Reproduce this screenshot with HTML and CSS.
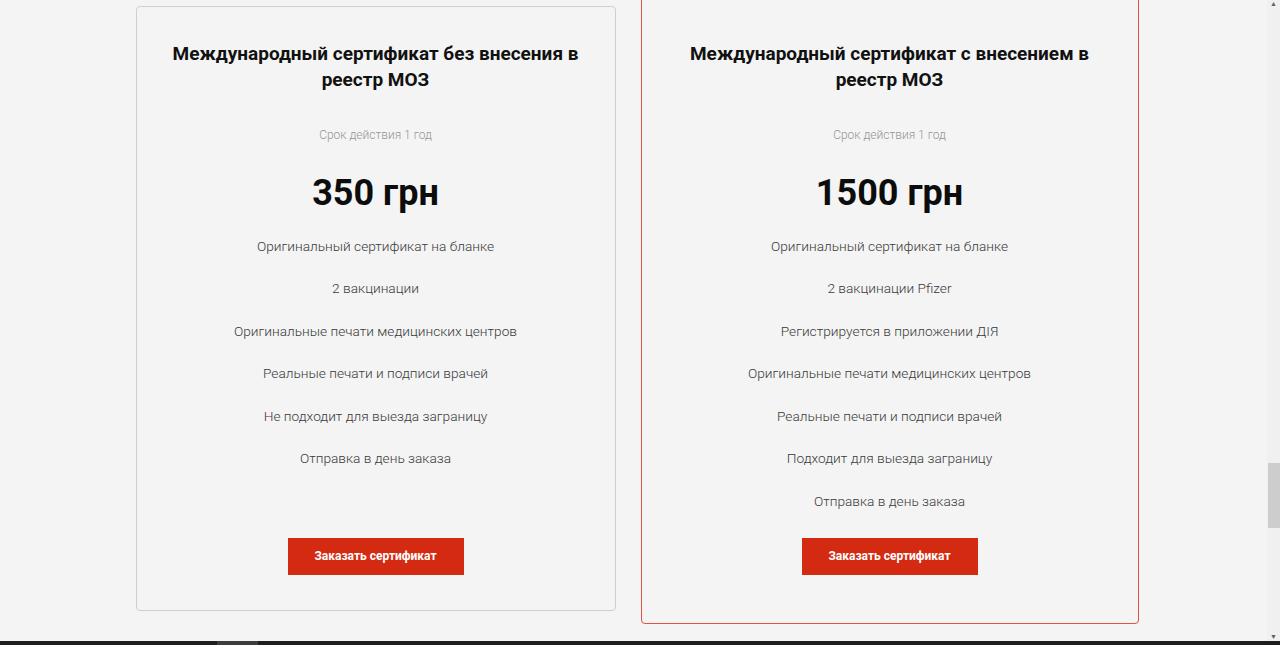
FILE: index.html
```html
<!DOCTYPE html>
<html lang="ru">
<head>
  <meta charset="UTF-8">
  <title>Сертификаты вакцинации</title>
  <link rel="stylesheet" href="styles.css">
</head>
<body>

<div class="tarifs">

  <div class="tarif">
    <h3>Международный сертификат без внесения в реестр МОЗ</h3>
    <div class="srok">Срок действия 1 год</div>
    <div class="cena">350 грн</div>
    <ul class="plusy">
      <li>Оригинальный сертификат на бланке</li>
      <li>2 вакцинации</li>
      <li>Оригинальные печати медицинских центров</li>
      <li>Реальные печати и подписи врачей</li>
      <li>Не подходит для выезда заграницу</li>
      <li>Отправка в день заказа</li>
    </ul>
    <a class="knopka" href="#">Заказать сертификат</a>
  </div>

  <div class="tarif tarif-glavny">
    <h3>Международный сертификат с внесением в реестр МОЗ</h3>
    <div class="srok">Срок действия 1 год</div>
    <div class="cena">1500 грн</div>
    <ul class="plusy">
      <li>Оригинальный сертификат на бланке</li>
      <li>2 вакцинации Pfizer</li>
      <li>Регистрируется в приложении ДІЯ</li>
      <li>Оригинальные печати медицинских центров</li>
      <li>Реальные печати и подписи врачей</li>
      <li>Подходит для выезда заграницу</li>
      <li>Отправка в день заказа</li>
    </ul>
    <a class="knopka" href="#">Заказать сертификат</a>
  </div>

</div>

<div class="skroll">
  <span class="strelka">&#9650;</span>
  <div class="polzunok"></div>
  <span class="strelka niz">&#9660;</span>
</div>
<div class="panel"><div class="panel-knopka"></div></div>

</body>
</html>
```

FILE: styles.css
```css
body {
  margin: 0;
  background: #f4f4f4;
  font-family: Roboto, "Noto Sans", sans-serif;
  overflow: hidden;
  min-height: 645px;
}
.tarifs {
  display: flex;
  justify-content: center;
  align-items: flex-start;
  gap: 25px;
  margin-top: -7px;
  padding-right: 6px;
}
.tarif {
  display: flex;
  flex-direction: column;
  align-items: center;
  width: 480px;
  height: 605px;
  box-sizing: border-box;
  margin-top: 13px;
  padding: 34px 20px 35px;
  background: #f4f4f4;
  border: 1px solid #cfcfcf;
  border-radius: 4px;
  text-align: center;
}
.tarif-glavny {
  width: 498px;
  height: 631px;
  margin-top: 0;
  padding: 47px 20px 48px;
  border-color: #dc5449;
}
.tarif h3 {
  margin: 0;
  font-size: 19px;
  line-height: 26px;
  font-weight: 700;
  color: #111;
  max-width: 430px;
}
.srok {
  margin-top: 33px;
  font-size: 12px;
  line-height: 18px;
  font-weight: 300;
  color: #959595;
}
.cena {
  margin-top: 27px;
  font-size: 36px;
  line-height: 44px;
  font-weight: 700;
  color: #0c0c0c;
}
.plusy {
  list-style: none;
  margin: 20.5px 0 0;
  padding: 0;
  flex-grow: 1;
}
.plusy li {
  font-size: 13.7px;
  line-height: 20px;
  font-weight: 300;
  color: #3a3a3a;
  margin-bottom: 22.5px;
}
.knopka {
  display: block;
  width: 176px;
  height: 37px;
  line-height: 37px;
  background: #d42a12;
  color: #fff;
  font-size: 12px;
  font-weight: 700;
  text-decoration: none;
}
.skroll {
  position: fixed;
  top: 0;
  right: 0;
  width: 13px;
  height: 641px;
  background: #f0f0f0;
}
.polzunok {
  position: absolute;
  top: 463px;
  left: 1px;
  width: 12px;
  height: 65px;
  background: #cdcdcd;
}
.strelka {
  position: absolute;
  top: 0;
  left: 3px;
  font-size: 7px;
  color: #606060;
}
.strelka.niz {
  top: auto;
  bottom: 0;
}
.panel {
  position: fixed;
  left: 0;
  bottom: 0;
  width: 100%;
  height: 4px;
  background: #1d1d1d;
}
.panel-knopka {
  margin-left: 217px;
  width: 41px;
  height: 4px;
  background: #3c3c3c;
}
```
